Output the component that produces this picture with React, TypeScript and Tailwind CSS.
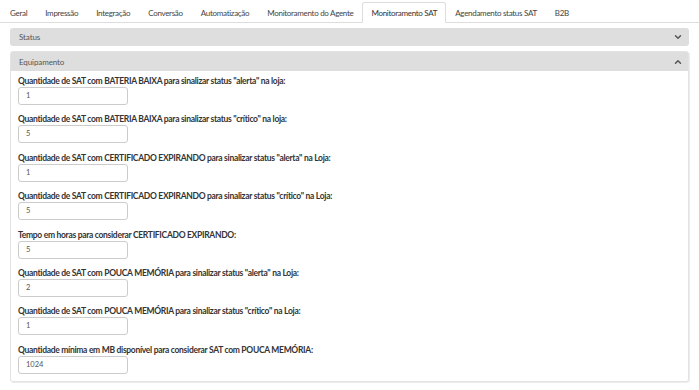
import { ChevronDown, ChevronUp } from "lucide-react";

const tabs = [
  "Geral",
  "Impressão",
  "Integração",
  "Conversão",
  "Automatização",
  "Monitoramento do Agente",
  "Monitoramento SAT",
  "Agendamento status SAT",
  "B2B",
];

const fields = [
  { label: 'Quantidade de SAT com BATERIA BAIXA para sinalizar status "alerta" na loja:', value: "1" },
  { label: 'Quantidade de SAT com BATERIA BAIXA para sinalizar status "crítico" na loja:', value: "5" },
  { label: 'Quantidade de SAT com CERTIFICADO EXPIRANDO para sinalizar status "alerta" na Loja:', value: "1" },
  { label: 'Quantidade de SAT com CERTIFICADO EXPIRANDO para sinalizar status "crítico" na Loja:', value: "5" },
  { label: "Tempo em horas para considerar CERTIFICADO EXPIRANDO:", value: "5" },
  { label: 'Quantidade de SAT com POUCA MEMÓRIA para sinalizar status "alerta" na Loja:', value: "2" },
  { label: 'Quantidade de SAT com POUCA MEMÓRIA para sinalizar status "crítico" na Loja:', value: "1" },
  { label: "Quantidade mínima em MB disponível para considerar SAT com POUCA MEMÓRIA:", value: "1024" },
];

export default function App() {
  return (
    <div className="w-[699px] h-[390px] bg-white text-[#333] overflow-hidden" style={{ fontFamily: 'Lato, "Open Sans", sans-serif' }}>
      <nav className="flex h-[23px] border-b border-[#ddd] pl-px pt-[2px]">
        {tabs.map((t) => (
          <div
            key={t}
            className={
              t === "Monitoramento SAT"
                ? "whitespace-nowrap px-[8px] -mb-px border border-[#ddd] border-b-white bg-white rounded-t-[3px] text-[8px] tracking-[-0.3px] leading-[20px] text-[#333]"
                : "whitespace-nowrap px-[8px] border border-transparent text-[8px] tracking-[-0.3px] leading-[20px] text-[#444]"
            }
          >
            {t}
          </div>
        ))}
      </nav>

      <div className="px-[10px] pt-[5px] flex flex-col gap-[5px]">
        <div className="flex items-center justify-between h-[18px] bg-[#dedede] rounded-[3px] pl-[9px] pr-[6px] text-[8px] tracking-[-0.1px] text-[#555]">
          <span>Status</span>
          <ChevronDown size={10} strokeWidth={3.5} className="text-[#555]" />
        </div>

        <div className="border border-[#e3e3e3] rounded-[3px] shadow-[1px_1px_0_#ececec]">
          <div className="flex items-center justify-between h-[19px] bg-[#dedede] pl-[8px] pr-[5px] text-[8px] tracking-[-0.1px] text-[#555]">
            <span>Equipamento</span>
            <ChevronUp size={10} strokeWidth={3.5} className="text-[#555]" />
          </div>
          <div className="flex flex-col gap-[8.4px] pl-[7px] pt-[4px] pb-[7px]">
            {fields.map((f) => (
              <div key={f.label} className="flex flex-col">
                <label className="whitespace-nowrap text-[8.5px] tracking-[-0.3px] font-bold text-[#333] leading-[12px]">{f.label}</label>
                <div className="w-[110px] h-[18px] border border-[#ccc] rounded-[3px] pl-[7px] text-[7.5px] leading-[16px] text-[#555]">
                  {f.value}
                </div>
              </div>
            ))}
          </div>
        </div>
      </div>
    </div>
  );
}
